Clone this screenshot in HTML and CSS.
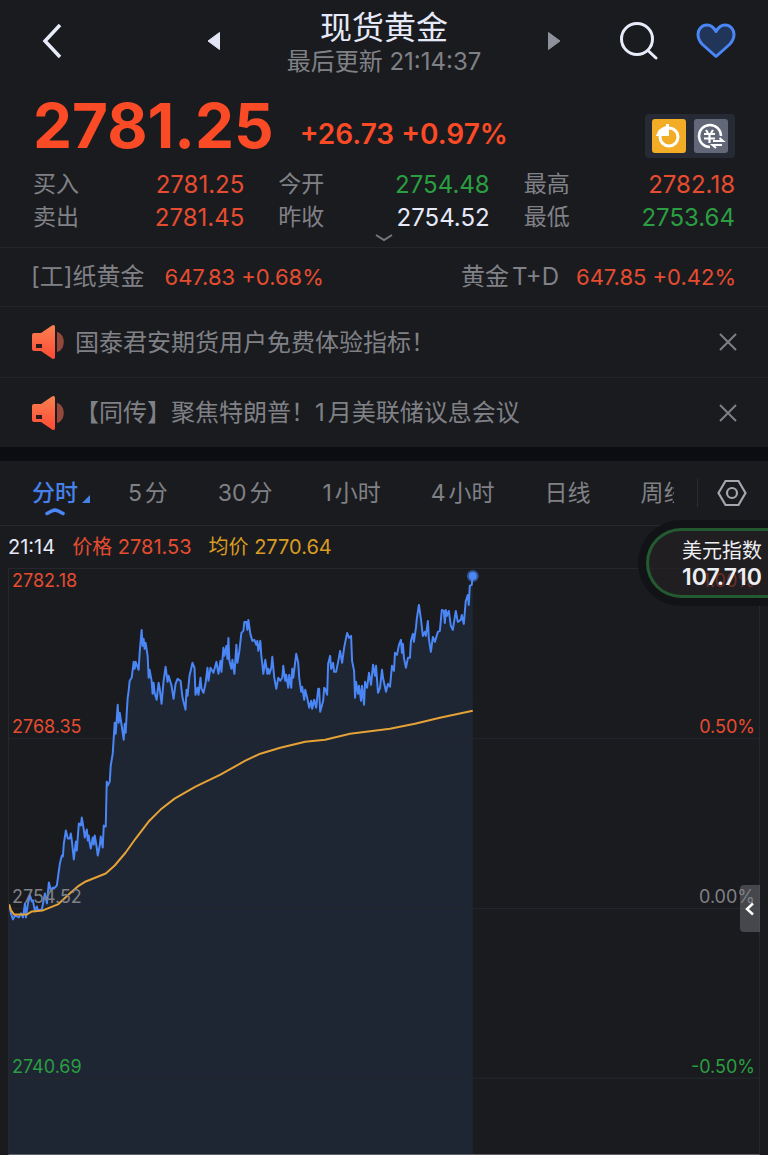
FILE: index.html
```html
<!DOCTYPE html>
<html lang="zh-CN">
<head>
    <meta charset="UTF-8">
    <meta name="viewport" content="width=device-width, initial-scale=1.0">
    <title>现货黄金</title>
    <link rel="stylesheet" href="styles.css">
</head>
<body>
    <header class="topbar">
        <button type="button" class="icon-btn back" aria-label="返回">
            <svg width="24" height="36" viewBox="0 0 24 36"><path d="M20 2 L5 18 L20 34" fill="none" stroke="#e8ecfa" stroke-width="3.500"/></svg>
        </button>
        <div class="switcher">
            <button type="button" class="icon-btn" aria-label="上一个">
                <svg width="14" height="20" viewBox="0 0 14 20"><path d="M12.500 1.500 V18.500 L1 10 Z" fill="#e2e6f5" stroke="#e2e6f5" stroke-linejoin="round"/></svg>
            </button>
            <div class="heading">
                <h1>现货黄金</h1>
                <p>最后更新 21:14:37</p>
            </div>
            <button type="button" class="icon-btn" aria-label="下一个">
                <svg width="14" height="20" viewBox="0 0 14 20"><path d="M1.500 1.500 V18.500 L13 10 Z" fill="#8f919b" stroke="#8f919b" stroke-linejoin="round"/></svg>
            </button>
        </div>
        <div class="actions">
            <button type="button" class="icon-btn" aria-label="搜索">
                <svg width="40" height="40" viewBox="0 0 40 40" fill="none" stroke="#e8ecfa" stroke-width="3" stroke-linecap="round"><circle cx="18" cy="18" r="15.500"/><path d="M29.500 30 L37 37"/></svg>
            </button>
            <button type="button" class="icon-btn" aria-label="收藏">
                <svg width="40" height="36" viewBox="0 0 40 36"><path d="M20 8.500 C17.500 4 14.500 2 11 2 C6 2 2 6 2 11.500 C2 15.500 3.500 18.500 6.500 21.500 L20 33.500 L33.500 21.500 C36.500 18.500 38 15.500 38 11.500 C38 6 34 2 29 2 C25.500 2 22.500 4 20 8.500 Z" fill="#213558" stroke="#4a86f5" stroke-width="3" stroke-linejoin="round"/></svg>
            </button>
        </div>
    </header>

    <section class="summary">
        <div class="price-row">
            <strong class="price">2781.25</strong>
            <span class="change">+26.73 +0.97%</span>
            <div class="tools">
                <button type="button" class="icon-btn" aria-label="积存金">
                    <svg width="34" height="34" viewBox="0 0 34 34"><rect width="34" height="34" rx="3" fill="#f2ac25"/><circle cx="17" cy="18" r="9" fill="none" stroke="#fff" stroke-width="3"/><path d="M17 17 V5 L14 5 L14 7 Q6 9 4 17 Z" fill="#fff"/></svg>
                </button>
                <button type="button" class="icon-btn" aria-label="汇率换算">
                    <svg width="34" height="34" viewBox="0 0 34 34"><rect width="34" height="34" rx="3" fill="#636879"/><g fill="none" stroke="#fff" stroke-width="2.500"><path d="M16 28 A11 11 0 1 1 27 17"/><path d="M12 11 L14 14 M19 11 L17 14 M10 15 H21 M10 19.500 H21 M15.500 14 V24" stroke-width="2.200"/><path d="M19 22 H29 L25.500 19 M28 26 H18.500 L22 29" stroke-width="2"/></g></svg>
                </button>
            </div>
        </div>
        <div class="quotes">
            <dl>
                <div><dt>买入</dt><dd class="up">2781.25</dd></div>
                <div><dt>卖出</dt><dd class="up">2781.45</dd></div>
            </dl>
            <dl>
                <div><dt>今开</dt><dd class="down">2754.48</dd></div>
                <div><dt>昨收</dt><dd>2754.52</dd></div>
            </dl>
            <dl>
                <div><dt>最高</dt><dd class="up">2782.18</dd></div>
                <div><dt>最低</dt><dd class="down">2753.64</dd></div>
            </dl>
        </div>
        <button type="button" class="icon-btn expand" aria-label="展开">
            <svg width="18" height="8" viewBox="0 0 18 8"><path d="M1 1 L9 6 L17 1" fill="none" stroke="#77787d" stroke-width="2"/></svg>
        </button>
    </section>

    <section class="related">
        <a href="#">[工]纸黄金<span class="up">647.83 +0.68%</span></a>
        <a href="#">黄金T+D<span class="up">647.85 +0.42%</span></a>
    </section>

    <svg class="defs" width="0" height="0">
        <linearGradient id="horn" x1="0" y1="0" x2="0" y2="1"><stop offset="0" stop-color="#f8814f"/><stop offset="1" stop-color="#ff4a36"/></linearGradient>
        <symbol id="speaker" viewBox="0 0 32 36">
            <path d="M25 8 C34 10 34 26 25 28 Z" fill="#95483a"/>
            <path d="M2 9 H9 L20 1.500 Q23 0 23 3 V33 Q23 36 20 34.500 L9 27 H2 Q0 27 0 25 V11 Q0 9 2 9 Z" fill="url(#horn)"/>
            <rect x="4" y="20" width="6" height="4" fill="#2c1a1a"/>
        </symbol>
        <symbol id="cross" viewBox="0 0 18 18"><path d="M1 1 L17 17 M17 1 L1 17" stroke="#7f8085" stroke-width="2"/></symbol>
    </svg>
    <section class="notices">
        <div class="notice">
            <svg width="32" height="36"><use href="#speaker"/></svg>
            <a href="#">国泰君安期货用户免费体验指标！</a>
            <button type="button" class="icon-btn" aria-label="关闭"><svg width="18" height="18"><use href="#cross"/></svg></button>
        </div>
        <div class="notice">
            <svg width="32" height="36"><use href="#speaker"/></svg>
            <a href="#">【同传】聚焦特朗普！1月美联储议息会议</a>
            <button type="button" class="icon-btn" aria-label="关闭"><svg width="18" height="18"><use href="#cross"/></svg></button>
        </div>
    </section>

    <nav class="periods">
        <div class="tabs">
            <button type="button" class="tab active">分时<svg class="corner" width="8" height="8" viewBox="0 0 8 8"><path d="M8 0 V8 H0 Z" fill="#4680e9"/></svg><svg class="mark" width="20" height="8" viewBox="0 0 20 8"><path d="M2 5.500 Q7 2.500 10 2 Q13 2.500 18 5.500" fill="none" stroke="#4a86f5" stroke-width="3.500" stroke-linecap="round"/></svg></button>
            <button type="button" class="tab">5分</button>
            <button type="button" class="tab">30分</button>
            <button type="button" class="tab">1小时</button>
            <button type="button" class="tab">4小时</button>
            <button type="button" class="tab">日线</button>
            <button type="button" class="tab">周线</button>
        </div>
        <button type="button" class="icon-btn settings" aria-label="设置">
            <svg width="30" height="28" viewBox="0 0 30 28" fill="none" stroke="#a4a6b0" stroke-width="2.200"><path d="M8.500 2 H21.500 L28.500 14 L21.500 26 H8.500 L1.500 14 Z"/><circle cx="15" cy="14" r="5"/></svg>
        </button>
    </nav>

    <main class="chart">
        <p class="legend"><span>21:14</span><span class="up">价格 2781.53</span><span class="avg">均价 2770.64</span></p>
        <div class="plot">
            <svg class="lines" viewBox="8 568 752 586" preserveAspectRatio="none">
                <path id="area" fill="#1e2533"/>
                <g class="grid"><path d="M8 738 H760 M8 908 H760 M8 1078 H760"/></g>
                <path id="price" class="price-line"/>
                <polyline class="avg-line" points="8,904 10,910 13,914 26,914 31,911 42,910 57,904 70,892 77,886 85,881 95,877 105,873 114,865 125,852 135,838 148,821 160,809 174,798 195,786 220,774 245,760 260,753 280,747 305,741 325,739 350,733 390,728 415,723 440,717 473,710"/>
                <circle cx="473" cy="575" r="6" fill="#4a86f5" fill-opacity="0.5"/>
                <circle cx="473" cy="575" r="4" fill="#4a86f5"/>
            </svg>
            <div class="scale">
                <div class="band">
                    <p class="up"><span>2782.18</span><span>1.00%</span></p>
                    <p class="up"><span>2768.35</span><span>0.50%</span></p>
                </div>
                <div class="band"><p><span>2754.52</span><span>0.00%</span></p></div>
                <div class="band"><p class="down"><span>2740.69</span><span>-0.50%</span></p></div>
            </div>
            <button type="button" class="drawer" aria-label="展开侧栏">
                <svg width="10" height="14" viewBox="0 0 10 14"><path d="M8 1.500 L2 7 L8 12.500" fill="none" stroke="#fff" stroke-width="2.500"/></svg>
            </button>
        </div>
        <a class="index-pill" href="#">美元指数<strong>107.710</strong></a>
    </main>

    <script src="chart.js"></script>
</body>
</html>
```
FILE: styles.css
```css
* {
    box-sizing: border-box;
}

body {
    margin: 0;
    background-color: #1a1b1f;
    color: #808186;
    font-family: Inter, "Noto Sans CJK SC", sans-serif;
    font-size: 23px;
    text-autospace: normal;
}

h1, p, dl, dd {
    margin: 0;
}

a {
    color: inherit;
    text-decoration: none;
}

svg {
    display: block;
}

button {
    padding: 0;
    border: none;
    background: none;
    color: inherit;
    font: inherit;
    cursor: pointer;
}

.up {
    color: #e64c30;
}

.down {
    color: #2b9e41;
}

.defs {
    position: absolute;
}

/* top bar */
.topbar {
    display: grid;
    grid-template-columns: 1fr 354px 1fr;
    align-items: center;
    height: 82px;
    padding: 0 32px;
}

.back {
    justify-self: start;
    padding-left: 8px;
}

.switcher {
    display: flex;
    align-items: center;
    justify-content: space-between;
}

.heading {
    padding-top: 6px;
    text-align: center;
}

.heading h1 {
    color: #e6e9f8;
    font-size: 32px;
    font-weight: 400;
    line-height: 36px;
}

.heading p {
    font-size: 24px;
    line-height: 32px;
}

.actions {
    display: flex;
    align-items: center;
    justify-content: flex-end;
    gap: 37px;
}

/* price and quotes */
.summary {
    padding: 12px 33px 5px;
    border-bottom: 1px solid #222429;
}

.price-row {
    display: flex;
    align-items: flex-end;
}

.price {
    color: #fb4a26;
    font-size: 62px;
    line-height: 64px;
}

.change {
    margin-left: 26px;
    color: #fb4a26;
    font-size: 28px;
    font-weight: 600;
    line-height: 48px;
}

.tools {
    display: flex;
    gap: 8px;
    margin-left: auto;
    padding: 5px 7px;
    border-radius: 4px;
    background-color: #262a35;
}

.quotes {
    display: grid;
    grid-template-columns: repeat(3, 1fr);
    gap: 34px;
    margin-top: 10px;
    line-height: 33px;
}

.quotes div {
    display: flex;
    justify-content: space-between;
}

.quotes dd {
    color: #e6e9f8;
    font-size: 24px;
}

.quotes dd.up {
    color: #e64c30;
}

.quotes dd.down {
    color: #2b9e41;
}

.expand {
    display: block;
    margin: 0 auto;
}

/* related products */
.related {
    display: flex;
    justify-content: space-between;
    padding: 0 32px 0 31px;
    border-bottom: 1px solid #222429;
    font-size: 24px;
    line-height: 58px;
}

.related span {
    margin-left: 17px;
    font-size: 22px;
}

/* notices */
.notice {
    display: flex;
    align-items: center;
    height: 70px;
    padding: 0 31px 0 32px;
}

.notice + .notice {
    border-top: 1px solid #222429;
}

.notice a {
    flex: 1;
    padding-bottom: 4px;
    margin-left: 11px;
    font-size: 24px;
}

/* period tabs */
.periods {
    display: flex;
    align-items: center;
    height: 79px;
    padding: 0 21px 0 32px;
    border-top: 14px solid #0c0d12;
    border-bottom: 1px solid #26282d;
}

.tabs {
    display: flex;
    flex: 1;
    gap: 50px;
    overflow: hidden;
    margin-right: 23px;
    white-space: nowrap;
}

.tab {
    flex: none;
    line-height: 63px;
}

.active {
    position: relative;
    overflow: visible;
    color: #4680e9;
    font-weight: 500;
}

.corner {
    position: absolute;
    right: -12px;
    bottom: 22px;
}

.mark {
    position: absolute;
    left: 50%;
    bottom: 9px;
    transform: translateX(-50%);
}

.settings {
    padding-left: 19px;
    border-left: 1px solid #2b2d33;
}

/* chart */
.chart {
    position: relative;
    padding: 0 8px;
}

.legend {
    display: flex;
    gap: 17px;
    color: #e6e9f8;
    font-size: 20px;
    line-height: 42px;
}

.legend .up {
    color: #e64c30;
}

.legend .avg {
    color: #d99c22;
}

.plot {
    position: relative;
    height: 587px;
    border: 1px solid #25272c;
    border-bottom-color: #606166;
}

.lines {
    position: absolute;
    inset: 0;
    width: 100%;
    height: 100%;
}

.grid {
    fill: none;
    stroke: #25282f;
}

.price-line {
    fill: none;
    stroke: #4a86f5;
    stroke-width: 2;
    stroke-linejoin: round;
}

.avg-line {
    fill: none;
    stroke: #e5a236;
    stroke-width: 2;
    stroke-linejoin: round;
}

.scale {
    position: relative;
    padding: 0 4px 0 3px;
    font-size: 18px;
    line-height: 24px;
}

.band {
    display: flex;
    flex-direction: column;
    justify-content: flex-end;
    height: 170px;
}

.band:first-child {
    justify-content: space-between;
}

.band p {
    display: flex;
    justify-content: space-between;
}

.drawer {
    position: absolute;
    top: 316px;
    right: -1px;
    display: flex;
    align-items: center;
    justify-content: center;
    width: 20px;
    height: 47px;
    border-radius: 4px 0 0 4px;
    background-color: rgba(125, 126, 130, 0.45);
}

.index-pill {
    position: absolute;
    top: 2px;
    right: 0;
    padding: 6px 6px 6px 33px;
    border: 3px solid #235a2f;
    border-right: none;
    border-radius: 35px 0 0 35px;
    background-color: rgba(35, 33, 35, 0.65);
    box-shadow: 0 0 0 8px #121317;
    color: #eceef2;
    font-size: 20px;
    line-height: 28px;
}

.index-pill strong {
    display: block;
    font-size: 23px;
    font-weight: 600;
    line-height: 24px;
}
```
FILE: chart.js
```javascript
const points = [
    [8, 904], [10, 913], [12, 919], [14, 915], [18, 917], [20, 913], [22, 917], [24, 903], [25, 917], [27, 903],
    [29, 895], [31, 901], [32, 900], [34, 911], [36, 906], [37, 910], [41, 909], [44, 893], [46, 903], [48, 882],
    [50, 890], [52, 887], [53, 888], [56, 885], [59, 863], [61, 855], [62, 856], [63, 843], [65, 830], [67, 838],
    [69, 838], [70, 833], [71, 840], [73, 859], [75, 841], [76, 850], [78, 823], [80, 825], [81, 817], [83, 829],
    [84, 837], [86, 829], [87, 840], [88, 835], [89, 843], [90, 848], [92, 837], [93, 844], [94, 835], [96, 847],
    [97, 855], [99, 845], [100, 836], [102, 847], [103, 825], [105, 826], [106, 781], [107, 785], [109, 781], [110, 765],
    [112, 753], [114, 722], [115, 733], [117, 704], [118, 722], [119, 712], [121, 725], [123, 739], [124, 723], [125, 732],
    [126, 713], [127, 697], [128, 690], [129, 680], [131, 677], [133, 661], [134, 668], [135, 661], [138, 669], [139, 652],
    [141, 629], [142, 645], [143, 638], [144, 648], [145, 642], [147, 655], [148, 677], [149, 669], [151, 680], [152, 693],
    [153, 682], [154, 692], [156, 699], [158, 682], [159, 687], [161, 703], [163, 680], [165, 666], [167, 681], [168, 675],
    [171, 685], [173, 698], [175, 683], [177, 678], [180, 680], [182, 697], [185, 709], [186, 689], [187, 695], [189, 675],
    [192, 662], [194, 667], [195, 694], [197, 687], [198, 694], [200, 677], [201, 688], [203, 692], [205, 683], [207, 667],
    [208, 680], [210, 667], [213, 672], [216, 661], [218, 673], [220, 660], [221, 671], [223, 647], [224, 655], [226, 645],
    [227, 658], [228, 637], [229, 660], [231, 668], [232, 659], [234, 673], [236, 644], [237, 662], [239, 650], [241, 632],
    [243, 630], [244, 621], [246, 621], [247, 629], [248, 619], [250, 633], [252, 640], [254, 639], [256, 644], [257, 640],
    [258, 650], [260, 640], [261, 655], [262, 663], [263, 673], [265, 659], [267, 673], [268, 668], [269, 673], [271, 667],
    [272, 656], [274, 677], [276, 688], [278, 677], [280, 680], [282, 677], [283, 665], [285, 680], [286, 674], [288, 687],
    [289, 674], [291, 687], [292, 668], [293, 677], [296, 653], [298, 662], [299, 677], [301, 691], [302, 686], [304, 699],
    [305, 689], [307, 697], [309, 707], [311, 700], [312, 708], [314, 699], [316, 707], [318, 688], [319, 688], [320, 711],
    [323, 700], [324, 687], [325, 688], [327, 694], [328, 663], [330, 655], [331, 668], [333, 662], [334, 671], [336, 671],
    [338, 661], [340, 650], [342, 662], [344, 647], [347, 632], [349, 637], [351, 635], [352, 660], [354, 670], [355, 697],
    [356, 681], [358, 693], [359, 685], [361, 700], [362, 685], [364, 704], [365, 681], [367, 687], [369, 672], [371, 684],
    [373, 664], [375, 675], [376, 665], [378, 692], [380, 687], [382, 669], [383, 677], [386, 691], [388, 683], [390, 686],
    [392, 665], [394, 670], [395, 652], [397, 654], [399, 644], [401, 639], [402, 652], [403, 643], [404, 657], [406, 667],
    [408, 657], [410, 657], [411, 640], [413, 633], [414, 641], [416, 627], [417, 617], [419, 604], [421, 618], [423, 635],
    [425, 631], [426, 635], [428, 620], [429, 638], [431, 651], [433, 636], [435, 641], [438, 631], [440, 630], [442, 609],
    [444, 610], [445, 622], [446, 609], [447, 615], [449, 610], [451, 625], [453, 629], [456, 610], [458, 621], [461, 619],
    [462, 614], [464, 623], [466, 600], [468, 594], [469, 604], [470, 585], [472, 584], [473, 572]
];

const line = 'M' + points.map(p => p.join(' ')).join(' L');
document.getElementById('price').setAttribute('d', line);
document.getElementById('area').setAttribute('d', line + ' V1154 H8 Z');
```
